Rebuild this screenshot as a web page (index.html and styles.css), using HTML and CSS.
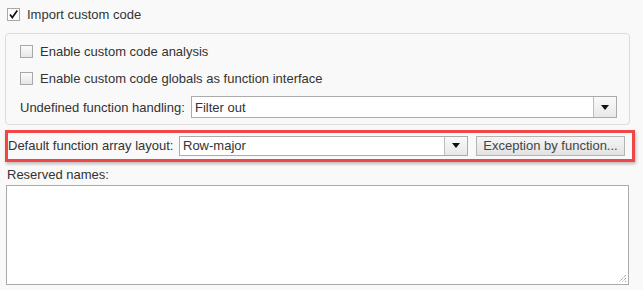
FILE: index.html
```html
<!DOCTYPE html>
<html>
<head>
<meta charset="utf-8">
<link rel="stylesheet" href="styles.css">
</head>
<body>
<div class="page">
  <div class="check-row top">
    <span class="cb checked"><svg width="11" height="11" viewBox="0 0 11 11"><path d="M2 5.5 L4.3 8.5 L9.3 1.5" fill="none" stroke="#111" stroke-width="1.7"/></svg></span>
    <span class="lbl">Import custom code</span>
  </div>
  <div class="panel">
    <div class="check-row">
      <span class="cb"></span>
      <span class="lbl">Enable custom code analysis</span>
    </div>
    <div class="check-row second">
      <span class="cb"></span>
      <span class="lbl">Enable custom code globals as function interface</span>
    </div>
    <div class="field-row">
      <span class="field-label w171">Undefined function handling:</span>
      <div class="select tall">
        <span class="sel-text">Filter out</span>
        <span class="sel-arrow"><svg width="8" height="5" viewBox="0 0 8 5"><path d="M0 0 H8 L4 5 Z" fill="#111"/></svg></span>
      </div>
    </div>
  </div>
  <div class="highlight">
    <span class="field-label w171">Default function array layout:</span>
    <div class="select short">
      <span class="sel-text">Row-major</span>
      <span class="sel-arrow"><svg width="8" height="5" viewBox="0 0 8 5"><path d="M0 0 H8 L4 5 Z" fill="#111"/></svg></span>
    </div>
    <div class="btn">Exception by function...</div>
  </div>
  <div class="res-label">Reserved names:</div>
  <div class="textarea">
    <svg class="grip" width="9" height="9" viewBox="0 0 9 9"><path d="M8 1 L1 8 M8 4 L4 8 M8 7 L7 8" stroke="#777" stroke-width="1" stroke-dasharray="1 1" fill="none"/></svg>
  </div>
</div>
</body>
</html>
```

FILE: styles.css
```css
html, body {
  margin: 0;
  padding: 0;
  background: #f9f9f9;
  font-family: "Liberation Sans", Arial, sans-serif;
  font-size: 13px;
  color: #333;
}
.page {
  width: 643px;
  height: 290px;
  overflow: hidden;
}
.check-row {
  display: flex;
  align-items: center;
  gap: 7px;
  height: 13px;
  line-height: 13px;
}
.check-row.top {
  margin: 8px 0 0 7px;
}
.check-row.second {
  margin-top: 14px;
}
.cb {
  width: 13px;
  height: 13px;
  box-sizing: border-box;
  border: 1px solid #a8a8a8;
  background: linear-gradient(#fbfbfb, #e6e6e6);
  display: flex;
  align-items: center;
  justify-content: center;
  flex: none;
}
.cb.checked {
  background: #fff;
}
.panel {
  margin: 12px 0 0 5px;
  width: 625px;
  height: 92px;
  box-sizing: border-box;
  border: 1px solid #dcdcdc;
  border-radius: 4px;
  padding: 11px 12px 0 14px;
}
.field-row {
  display: flex;
  align-items: center;
  margin-top: 11px;
  height: 22px;
}
.field-label {
  flex: none;
  white-space: nowrap;
}
.w171 {
  width: 171px;
}
.select {
  display: flex;
  box-sizing: border-box;
  border: 1px solid #ababab;
  background: #fff;
}
.select.tall {
  flex: 1;
  height: 22px;
}
.select.short {
  width: 289px;
  height: 20px;
}
.sel-text {
  flex: 1;
  padding-left: 3px;
  display: flex;
  align-items: center;
}
.sel-arrow {
  width: 22px;
  border-left: 1px solid #bdbdbd;
  background: linear-gradient(#fafafa, #e8e8e8);
  display: flex;
  align-items: center;
  justify-content: center;
}
.highlight {
  margin: 5px 0 0 5px;
  width: 630px;
  height: 32px;
  box-sizing: border-box;
  border: 3px solid #f04646;
  box-shadow: 1px 2px 3px rgba(0,0,0,0.25);
  display: flex;
  align-items: center;
  padding-bottom: 1px;
}
.highlight .w171 {
  width: 171px;
}
.btn {
  margin-left: 8px;
  width: 149px;
  height: 20px;
  box-sizing: border-box;
  border: 1px solid #b4b4b4;
  background: linear-gradient(#f6f6f6, #e2e2e2);
  display: flex;
  align-items: center;
  justify-content: center;
  color: #444;
}
.res-label {
  margin: 5px 0 0 7px;
  line-height: 15px;
  height: 15px;
}
.textarea {
  position: relative;
  margin: 3px 0 0 6px;
  width: 623px;
  height: 100px;
  box-sizing: border-box;
  border: 1px solid #ababab;
  background: #fff;
}
.grip {
  position: absolute;
  right: 1px;
  bottom: 1px;
}
```
